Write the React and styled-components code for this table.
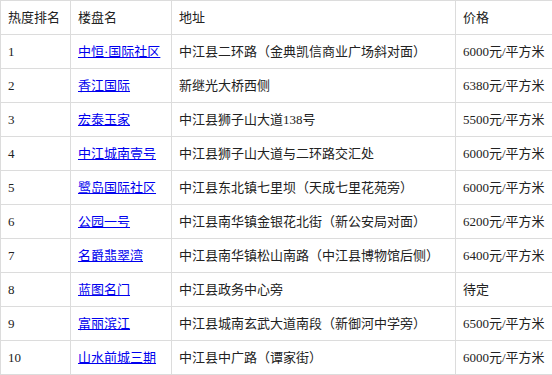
import React from 'react'
import styled, { createGlobalStyle } from 'styled-components'

const GlobalStyle = createGlobalStyle`
    html, body {
        margin: 0;
        padding: 0;
        background: #ffffff;
    }
    body {
        font-family: "Liberation Serif", "Noto Sans CJK SC", serif;
        font-size: 13px;
        color: #222;
    }
`

const Table = styled.table`
    width: 552px;
    border-collapse: collapse;
    table-layout: fixed;
`

const Cell = styled.td`
    border: 1px solid #dcdcdc;
    height: 34px;
    padding: 0 0 0 7px;
    box-sizing: border-box;
    white-space: nowrap;
    overflow: hidden;
    vertical-align: middle;
    line-height: 16px;
`

const HeadCell = styled(Cell).attrs({ as: 'th' })`
    font-weight: normal;
    text-align: left;
`

const Link = styled.a`
    color: #0000ee;
    text-decoration: underline;
    cursor: pointer;
`

const rows = [
  ['1', '中恒·国际社区', '中江县二环路（金典凯信商业广场斜对面）', '6000元/平方米'],
  ['2', '香江国际', '新继光大桥西侧', '6380元/平方米'],
  ['3', '宏泰玉家', '中江县狮子山大道138号', '5500元/平方米'],
  ['4', '中江城南壹号', '中江县狮子山大道与二环路交汇处', '6000元/平方米'],
  ['5', '鹭岛国际社区', '中江县东北镇七里坝（天成七里花苑旁）', '6000元/平方米'],
  ['6', '公园一号', '中江县南华镇金银花北街（新公安局对面）', '6200元/平方米'],
  ['7', '名爵翡翠湾', '中江县南华镇松山南路（中江县博物馆后侧）', '6400元/平方米'],
  ['8', '蓝图名门', '中江县政务中心旁', '待定'],
  ['9', '富丽滨江', '中江县城南玄武大道南段（新御河中学旁）', '6500元/平方米'],
  ['10', '山水前城三期', '中江县中广路（谭家街）', '6000元/平方米'],
]

const App = () => {
  return (
    <>
      <GlobalStyle />
      <Table>
        <colgroup>
          <col style={{ width: 70 }} />
          <col style={{ width: 101 }} />
          <col style={{ width: 284 }} />
          <col style={{ width: 97 }} />
        </colgroup>
        <thead>
          <tr>
            <HeadCell>热度排名</HeadCell>
            <HeadCell>楼盘名</HeadCell>
            <HeadCell>地址</HeadCell>
            <HeadCell>价格</HeadCell>
          </tr>
        </thead>
        <tbody>
          {rows.map((r) => (
            <tr key={r[0]}>
              <Cell>{r[0]}</Cell>
              <Cell><Link>{r[1]}</Link></Cell>
              <Cell>{r[2]}</Cell>
              <Cell>{r[3]}</Cell>
            </tr>
          ))}
        </tbody>
      </Table>
    </>
  )
}

export default App
